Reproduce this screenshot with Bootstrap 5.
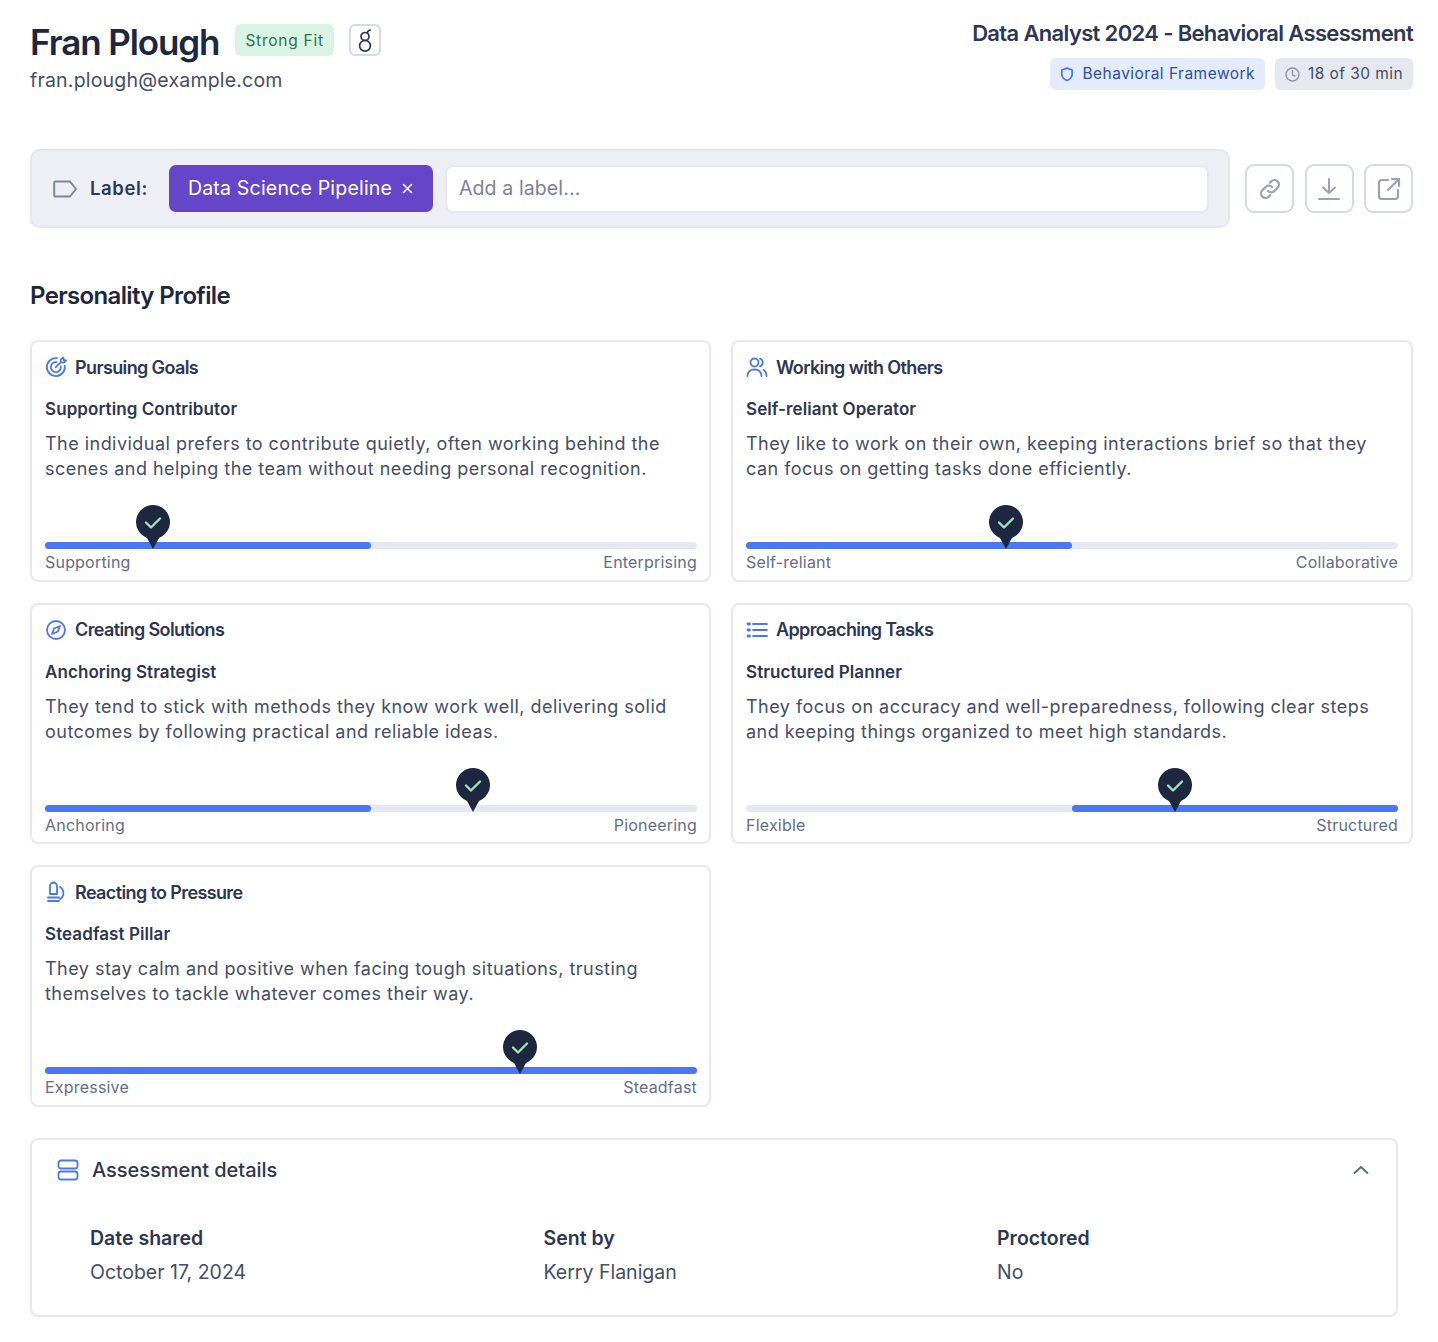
<!DOCTYPE html>
<html lang="en"><head><meta charset="utf-8"><title>Fran Plough</title>
<link href="https://cdn.jsdelivr.net/npm/bootstrap@5.3.0/dist/css/bootstrap.min.css" rel="stylesheet">
<style>
body{font-family:Inter,"Liberation Sans",sans-serif;color:#454d68;background:#fff;padding:20px 25px 0 30px;-webkit-font-smoothing:antialiased}
.hd{font-family:Inter,"Liberation Sans",sans-serif;font-weight:600}
.top-row{height:129px}
.who-name{font-size:35px;line-height:44px;color:#1e2740;letter-spacing:-1.1px;margin:0}
.who-mail{font-size:19.5px;line-height:28px;margin-top:2px;letter-spacing:.2px}
.pillx{font-size:15.5px;line-height:32px;height:32px;border-radius:6px;padding:0 10px;display:inline-flex;align-items:center;white-space:nowrap;letter-spacing:.48px}
.p-green{background:#d9f3e4;color:#33704f;margin-left:16px;letter-spacing:.75px;padding-top:1px}
.p-blue{background:#e4ebfd;color:#2d4fa8}
.p-gray{background:#e6e8ef;color:#444c66;letter-spacing:.42px}
.logo-box{width:32px;height:32px;border:2px solid #d5d9e8;border-radius:6px;display:flex;align-items:center;justify-content:center;margin-left:15px}
.test-title{font-size:22px;line-height:28px;color:#2d3654;letter-spacing:-.65px;margin:-1px 0 11px}
.label-bar{height:79px;width:1200px;background:#edeff4;border:2px solid #e3e6ef;border-radius:10px;padding:0 19px 0 21px}
.label-word{font-size:18.5px;font-weight:600;color:#2d3654;letter-spacing:.6px}
.tagx{height:47px;width:264px;background:#6546c9;color:#fff;border-radius:7px;font-size:19.5px;padding:0 20px 0 19px;white-space:nowrap;margin-left:21px;letter-spacing:.2px}
.add-field{height:48px;background:#fff;border:2px solid #e6e8f0;border-radius:8px;color:#7b8299;font-size:19.5px;padding:0 12px;margin-left:12px;letter-spacing:.12px}
.sq-btn{width:49px;height:49px;border:2px solid #d5d9e8;border-radius:9px;background:#fff;padding:0}
.btn-row{gap:10.5px}
.section-h{font-size:24px;line-height:32px;color:#1e2740;letter-spacing:-.65px;margin:52px 0 28.3px}
.prof-grid{display:grid;grid-template-columns:681px 682px;gap:21px 20px}
.pcard{height:241.6px;border:2px solid #e6e8f1;border-radius:8px;padding:11.5px 12px 7px 13px;background:#fff}
.pcard:nth-child(even){padding-right:13px}
.pc-title{font-size:18px;line-height:27px;color:#2d3654;letter-spacing:-.62px}
.pc-sub{font-size:17px;line-height:26px;color:#2d3654;letter-spacing:.08px;margin-top:15.2px}
.pc-desc{font-size:18px;line-height:25px;margin-top:9px;letter-spacing:.47px}
.slider-wrap{position:relative;height:7px;margin-top:61px;background:#e6e8f1;border-radius:4px}
.slider-fill{position:absolute;top:0;bottom:0;background:#4a78f5;border-radius:4px}
.pin{position:absolute;top:-37px;width:34px;height:44px;transform:translateX(-17px)}
.ends{font-size:16px;line-height:22px;margin-top:2px;color:#656d87;letter-spacing:.2px}
.detail-card{width:1368px;height:179px;border:2px solid #e6e8f1;border-radius:8px;margin-top:31px;padding:0 27px 0 25px}
.dc-head{height:60px;font-size:20px;font-weight:500;color:#2d3654;letter-spacing:-.03px}
.dc-icon{margin-right:13px}
.dc-cols{display:grid;grid-template-columns:453.5px 453.5px 1fr;margin:24px 0 0 33px}
.dc-l{font-size:19.5px;line-height:28px;font-weight:600;color:#2d3654}
.dc-v{font-size:19.5px;line-height:28px;margin-top:6px}
</style></head><body>
<div class="top-row d-flex justify-content-between align-items-start">
 <div>
  <div class="d-flex align-items-start">
   <h1 class="who-name hd">Fran Plough</h1>
   <span class="pillx p-green mt-1">Strong Fit</span>
   <span class="logo-box mt-1"><svg width="16" height="26" viewBox="0 0 16 26" fill="none" stroke="#2d3654" stroke-width="1.7"><circle cx="8" cy="18.800" r="5.400"/><circle cx="8" cy="9.500" r="4"/><path d="M10.300 6.200c.2-1.800 1.200-3 2.900-3.200" stroke-linecap="round"/></svg></span>
  </div>
  <div class="who-mail">fran.plough@example.com</div>
 </div>
 <div class="d-flex flex-column align-items-end">
  <h2 class="test-title hd">Data Analyst 2024 - Behavioral Assessment</h2>
  <div class="d-flex" style="gap:10px">
   <span class="pillx p-blue gap-2"><svg width="14" height="15" viewBox="0 0 14 15" fill="none" stroke="#4a78f5" stroke-width="1.800"><path d="M7 1.200l5.200 1.800v4c0 3.300-2.200 5.400-5.200 6.500C4 12.400 1.800 10.300 1.800 7V3z" stroke-linejoin="round"/></svg>Behavioral Framework</span>
   <span class="pillx p-gray gap-2"><svg width="15" height="15" viewBox="0 0 15 15" fill="none" stroke="#8d93a8" stroke-width="1.400"><circle cx="7.500" cy="7.500" r="6.500"/><path d="M7.500 3.800v4l2.500 1.400" stroke-linecap="round"/></svg>18 of 30 min</span>
  </div>
 </div>
</div>
<div class="d-flex align-items-center justify-content-between">
 <div class="label-bar d-flex align-items-center">
  <svg width="25" height="18" viewBox="0 0 25 18" fill="none" stroke="#7c849d" stroke-width="2"><path d="M2.500 1.500h14.500l6 7.500-6 7.500H2.500a1.300 1.300 0 0 1-1.300-1.300V2.800a1.300 1.300 0 0 1 1.300-1.300z" stroke-linejoin="round"/></svg>
  <span class="label-word ms-2 ps-1">Label:</span>
  <span class="tagx d-flex align-items-center justify-content-between"><span>Data Science Pipeline</span><svg width="11" height="11" viewBox="0 0 11 11" stroke="#fff" stroke-width="1.600" stroke-linecap="round"><path d="M1.500 1.500l8 8M9.500 1.500l-8 8"/></svg></span>
  <div class="add-field flex-grow-1 d-flex align-items-center">Add a label...</div>
 </div>
 <div class="d-flex btn-row">
  <button class="sq-btn btn d-flex align-items-center justify-content-center" aria-label="Copy link"><svg width="24" height="24" viewBox="0 0 24 24" fill="none" stroke="#9aa1b8" stroke-width="2.200" stroke-linecap="round"><path d="M10 14a4.500 4.500 0 0 0 6.400 0l3.200-3.200a4.500 4.500 0 0 0-6.400-6.400l-1.400 1.400"/><path d="M14 10a4.500 4.500 0 0 0-6.400 0l-3.200 3.200a4.500 4.500 0 0 0 6.400 6.400l1.400-1.400"/></svg></button>
  <button class="sq-btn btn d-flex align-items-center justify-content-center" aria-label="Download"><svg width="24" height="24" viewBox="0 0 24 24" fill="none" stroke="#9aa1b8" stroke-width="2" stroke-linecap="round" stroke-linejoin="round"><path d="M12 2v14M6 10.500l6 5.500 6-5.500M2 22h20"/></svg></button>
  <button class="sq-btn btn d-flex align-items-center justify-content-center" aria-label="Open"><svg width="24" height="24" viewBox="0 0 24 24" fill="none" stroke="#9aa1b8" stroke-width="2.200" stroke-linecap="round" stroke-linejoin="round"><path d="M11 3H5a3 3 0 0 0-3 3v13a3 3 0 0 0 3 3h13a3 3 0 0 0 3-3v-6"/><path d="M11 13L22 2M15 2h7v7"/></svg></button>
 </div>
</div>
<h3 class="section-h hd">Personality Profile</h3>
<div class="prof-grid">
 <div class="pcard">
  <div class="pc-title hd d-flex align-items-center"><svg class="me-2" width="22" height="22" viewBox="0 0 22 22" fill="none" stroke="#4a78f5" stroke-width="1.800" stroke-linecap="round"><path d="M12 2.200A9 9 0 1 0 19.800 10"/><path d="M11.500 6.200A5 5 0 1 0 15.800 10.500"/><path d="M10.800 11.200l5-5M15.800 6.200V3.500l2.500-2 .5 2.500 2.300.5-2.300 2.200z" stroke-linejoin="round"/></svg>Pursuing Goals</div>
  <div class="pc-sub hd">Supporting Contributor</div>
  <div class="pc-desc">The individual prefers to contribute quietly, often working behind the scenes and helping the team without needing personal recognition.</div>
  <div class="slider-wrap"><div class="slider-fill" style="left:0;width:50%"></div>
   <svg class="pin" style="left:16.56%" viewBox="0 0 34 44"><path d="M17 0a17 17 0 0 1 6 32.900L17 44l-6-11.100A17 17 0 0 1 17 0z" fill="#1e2740"/><path d="M10 17.500l5 5 9-9" fill="none" stroke="#9fe4bd" stroke-width="2.400" stroke-linecap="round" stroke-linejoin="round"/></svg></div>
  <div class="ends d-flex justify-content-between"><span>Supporting</span><span>Enterprising</span></div>
 </div>
 <div class="pcard">
  <div class="pc-title hd d-flex align-items-center"><svg class="me-2" width="22" height="22" viewBox="0 0 22 22" fill="none" stroke="#4a78f5" stroke-width="1.800" stroke-linecap="round"><circle cx="8.500" cy="6.500" r="4"/><path d="M1.500 20c0-4 3-6.500 7-6.500s7 2.500 7 6.500M14 2.700a4 4 0 0 1 0 7.600M17.500 14c2 1 3 3 3 6"/></svg>Working with Others</div>
  <div class="pc-sub hd">Self-reliant Operator</div>
  <div class="pc-desc">They like to work on their own, keeping interactions brief so that they can focus on getting tasks done efficiently.</div>
  <div class="slider-wrap"><div class="slider-fill" style="left:0;width:50%"></div>
   <svg class="pin" style="left:39.9%" viewBox="0 0 34 44"><path d="M17 0a17 17 0 0 1 6 32.900L17 44l-6-11.100A17 17 0 0 1 17 0z" fill="#1e2740"/><path d="M10 17.500l5 5 9-9" fill="none" stroke="#9fe4bd" stroke-width="2.400" stroke-linecap="round" stroke-linejoin="round"/></svg></div>
  <div class="ends d-flex justify-content-between"><span>Self-reliant</span><span>Collaborative</span></div>
 </div>
 <div class="pcard">
  <div class="pc-title hd d-flex align-items-center"><svg class="me-2" width="22" height="22" viewBox="0 0 22 22" fill="none" stroke="#4a78f5" stroke-width="1.800" stroke-linejoin="round"><circle cx="11" cy="11" r="9"/><path d="M15 7l-2 5.500L7 15l2-5.500z"/></svg>Creating Solutions</div>
  <div class="pc-sub hd">Anchoring Strategist</div>
  <div class="pc-desc">They tend to stick with methods they know work well, delivering solid outcomes by following practical and reliable ideas.</div>
  <div class="slider-wrap"><div class="slider-fill" style="left:0;width:50%"></div>
   <svg class="pin" style="left:65.64%" viewBox="0 0 34 44"><path d="M17 0a17 17 0 0 1 6 32.900L17 44l-6-11.100A17 17 0 0 1 17 0z" fill="#1e2740"/><path d="M10 17.500l5 5 9-9" fill="none" stroke="#9fe4bd" stroke-width="2.400" stroke-linecap="round" stroke-linejoin="round"/></svg></div>
  <div class="ends d-flex justify-content-between"><span>Anchoring</span><span>Pioneering</span></div>
 </div>
 <div class="pcard">
  <div class="pc-title hd d-flex align-items-center"><svg class="me-2" width="22" height="22" viewBox="0 0 22 22" fill="none" stroke="#4a78f5" stroke-width="1.800" stroke-linecap="round"><path d="M7 5h14M7 11h14M7 17h14"/><path d="M2 5h1.500M2 11h1.500M2 17h1.500" stroke-width="2.800"/></svg>Approaching Tasks</div>
  <div class="pc-sub hd">Structured Planner</div>
  <div class="pc-desc">They focus on accuracy and well-preparedness, following clear steps and keeping things organized to meet high standards.</div>
  <div class="slider-wrap"><div class="slider-fill" style="left:50%;width:50%"></div>
   <svg class="pin" style="left:65.8%" viewBox="0 0 34 44"><path d="M17 0a17 17 0 0 1 6 32.900L17 44l-6-11.100A17 17 0 0 1 17 0z" fill="#1e2740"/><path d="M10 17.500l5 5 9-9" fill="none" stroke="#9fe4bd" stroke-width="2.400" stroke-linecap="round" stroke-linejoin="round"/></svg></div>
  <div class="ends d-flex justify-content-between"><span>Flexible</span><span>Structured</span></div>
 </div>
 <div class="pcard">
  <div class="pc-title hd d-flex align-items-center"><svg class="me-2" width="22" height="22" viewBox="0 0 22 22" fill="none" stroke="#4a78f5" stroke-width="1.800" stroke-linecap="round" stroke-linejoin="round"><path d="M5 13V5a3.500 3.500 0 0 1 7 0v8zM3 16.500h11M3 20h11"/><path d="M15 6a7 7 0 0 1 0 12"/></svg>Reacting to Pressure</div>
  <div class="pc-sub hd">Steadfast Pillar</div>
  <div class="pc-desc">They stay calm and positive when facing tough situations, trusting themselves to tackle whatever comes their way.</div>
  <div class="slider-wrap"><div class="slider-fill" style="left:0;width:100%"></div>
   <svg class="pin" style="left:72.85%" viewBox="0 0 34 44"><path d="M17 0a17 17 0 0 1 6 32.900L17 44l-6-11.100A17 17 0 0 1 17 0z" fill="#1e2740"/><path d="M10 17.500l5 5 9-9" fill="none" stroke="#9fe4bd" stroke-width="2.400" stroke-linecap="round" stroke-linejoin="round"/></svg></div>
  <div class="ends d-flex justify-content-between"><span>Expressive</span><span>Steadfast</span></div>
 </div>
</div>
<div class="detail-card">
 <div class="dc-head d-flex align-items-center justify-content-between">
  <span class="d-flex align-items-center"><svg class="dc-icon" width="22" height="22" viewBox="0 0 22 22" fill="none" stroke="#4a78f5" stroke-width="1.800"><rect x="1.500" y="1.500" width="19" height="8" rx="2.500"/><rect x="1.500" y="12.500" width="19" height="8" rx="2.500"/></svg>Assessment details</span>
  <svg width="16" height="10" viewBox="0 0 16 10" fill="none" stroke="#5f6780" stroke-width="1.800" stroke-linecap="round" stroke-linejoin="round"><path d="M1.500 8L8 2l6.500 6"/></svg>
 </div>
 <div class="dc-cols">
  <div><div class="dc-l">Date shared</div><div class="dc-v">October 17, 2024</div></div>
  <div><div class="dc-l">Sent by</div><div class="dc-v">Kerry Flanigan</div></div>
  <div><div class="dc-l">Proctored</div><div class="dc-v">No</div></div>
 </div>
</div>
</body></html>
